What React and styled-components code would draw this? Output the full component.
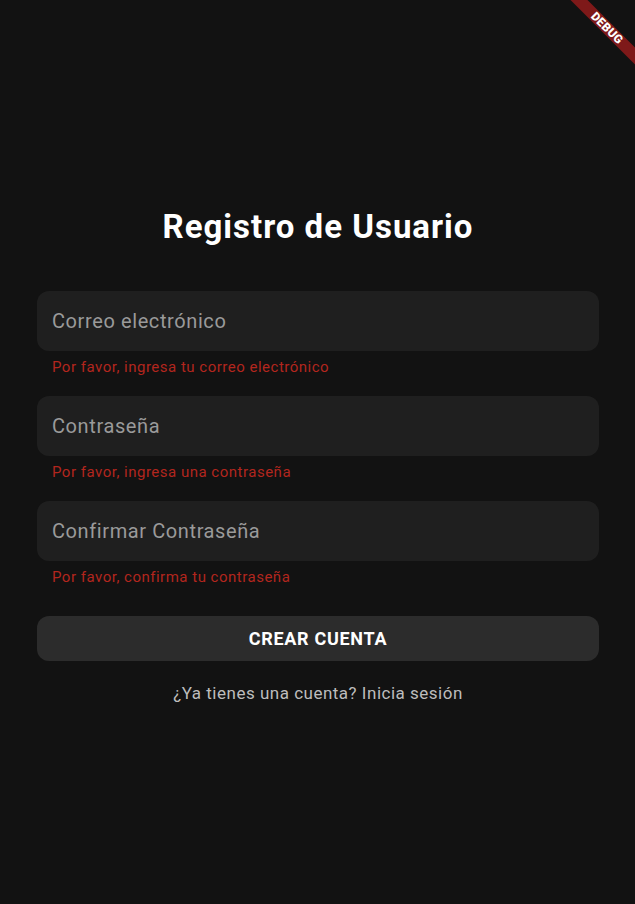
import React from 'react';
import styled, { createGlobalStyle } from 'styled-components';

const GlobalStyle = createGlobalStyle`
    html, body {
        margin: 0;
        padding: 0;
        background: #121212;
        font-family: Roboto, 'Noto Sans', sans-serif;
    }
`

const Screen = styled.div`
    position: relative;
    width: 100%;
    height: 904px;
    overflow: hidden;
    background: #121212;
    display: flex;
    flex-direction: column;
    justify-content: center;
    padding: 8px 36px 0 37px;
    box-sizing: border-box;
`

const Title = styled.h1`
    margin: 0 0 44px;
    text-align: center;
    color: #ffffff;
    font-size: 33px;
    font-weight: 700;
    letter-spacing: 1px;
    line-height: 40px;
`

const FieldGroup = styled.div`
    display: flex;
    flex-direction: column;
    margin-bottom: 20px;
`

const Input = styled.input`
    height: 60px;
    border: none;
    outline: none;
    border-radius: 12px;
    background: #1f1f1f;
    padding: 0 15px;
    color: #ffffff;
    font-family: Roboto, sans-serif;
    font-size: 20px;
    letter-spacing: 0.6px;
    box-sizing: border-box;

    &::placeholder {
        color: #9a9a9a;
    }
`

const ErrorText = styled.span`
    margin-top: 7px;
    padding-left: 15px;
    color: #b3261e;
    font-size: 15px;
    letter-spacing: 0.5px;
    line-height: 18px;
`

const Button = styled.button`
    margin-top: 10px;
    height: 45px;
    border: none;
    border-radius: 12px;
    background: #2c2c2c;
    color: #ffffff;
    font-family: Roboto, sans-serif;
    font-size: 18px;
    font-weight: 700;
    letter-spacing: 0.7px;
    cursor: pointer;
`

const LinkText = styled.a`
    margin-top: 20px;
    text-align: center;
    color: #bdbdbd;
    font-size: 17px;
    letter-spacing: 0.5px;
    line-height: 24px;
    text-decoration: none;
    cursor: pointer;
`

const Ribbon = styled.div`
    position: absolute;
    top: 0;
    right: 0;
    width: 100px;
    height: 100px;
    overflow: hidden;
    pointer-events: none;
`

const RibbonBand = styled.div`
    position: absolute;
    left: 11.7px;
    top: 22.3px;
    width: 120px;
    height: 12px;
    transform: rotate(45deg);
    background: #7e1919;
    color: #ffffff;
    font-family: Roboto, sans-serif;
    font-size: 12px;
    font-weight: 900;
    letter-spacing: 0.2px;
    line-height: 12px;
    text-align: center;
`

const fields = [
    { placeholder: 'Correo electrónico', type: 'email', error: 'Por favor, ingresa tu correo electrónico' },
    { placeholder: 'Contraseña', type: 'password', error: 'Por favor, ingresa una contraseña' },
    { placeholder: 'Confirmar Contraseña', type: 'password', error: 'Por favor, confirma tu contraseña' },
]

const App = () => {
    return (
        <>
            <GlobalStyle />
            <Screen>
                <Title>Registro de Usuario</Title>
                {fields.map((f) => (
                    <FieldGroup key={f.placeholder}>
                        <Input type={f.type} placeholder={f.placeholder} />
                        <ErrorText>{f.error}</ErrorText>
                    </FieldGroup>
                ))}
                <Button>CREAR CUENTA</Button>
                <LinkText>¿Ya tienes una cuenta? Inicia sesión</LinkText>
                <Ribbon>
                    <RibbonBand>DEBUG</RibbonBand>
                </Ribbon>
            </Screen>
        </>
    )
}

export default App
